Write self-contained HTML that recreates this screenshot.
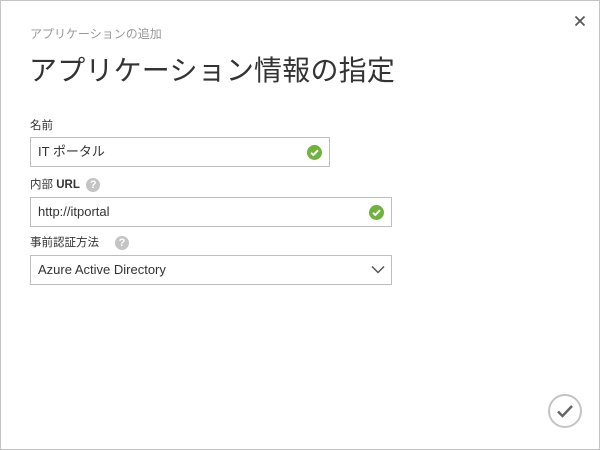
<!DOCTYPE html>
<html><head><meta charset="utf-8"><style>
*{margin:0;padding:0;box-sizing:border-box}
body{width:600px;height:450px;background:#fff;font-family:"Liberation Sans","Noto Sans CJK JP",sans-serif;color:#333;position:relative;overflow:hidden}
.frame{position:absolute;left:0;top:0;width:600px;height:450px;border:1px solid #c4c4c4}
.a{position:absolute}
.sub{left:30px;top:25px;font-size:12px;color:#999}
.title{left:29px;top:49px;font-size:28px;color:#333;letter-spacing:0.2px}
.lbl{font-size:11.5px;color:#333}
.box{border:1px solid #bdbdbd;height:30px;font-size:13px;padding-left:7px;line-height:28px;color:#333}
.chk{position:absolute;right:7px;top:7px;width:15px;height:15px;border-radius:50%;background:#6fb33d}
.chk svg{display:block}
.q{display:inline-block;width:14px;height:14px;border-radius:50%;background:#c4c4c4;color:#fff;font-size:11px;font-weight:bold;text-align:center;line-height:14px;vertical-align:middle}
</style></head><body>
<div class="frame"></div>
<div class="a sub">アプリケーションの追加</div>
<div class="a title">アプリケーション情報の指定</div>
<svg class="a" style="left:574px;top:15px" width="12" height="12"><path d="M1.5 1.5L10.5 10.5M10.5 1.5L1.5 10.5" stroke="#555" stroke-width="1.7"/></svg>

<div class="a lbl" style="left:30px;top:117px">名前</div>
<div class="a box" style="left:30px;top:137px;width:300px">IT ポータル<div class="chk"><svg width="15" height="15"><path d="M4 7.8L6.4 10L11 5.2" stroke="#fff" stroke-width="2" fill="none"/></svg></div></div>

<div class="a lbl" style="left:30px;top:176px">内部 <b>URL</b> &nbsp;<span class="q">?</span></div>
<div class="a box" style="left:30px;top:197px;width:362px">http://itportal<div class="chk"><svg width="15" height="15"><path d="M4 7.8L6.4 10L11 5.2" stroke="#fff" stroke-width="2" fill="none"/></svg></div></div>

<div class="a lbl" style="left:30px;top:234px">事前認証方法 &nbsp;&nbsp;&nbsp;&nbsp;<span class="q">?</span></div>
<div class="a box" style="left:30px;top:255px;width:362px">Azure Active Directory<svg style="position:absolute;right:6px;top:9px" width="14" height="9"><path d="M1 1.5L7 7.5L13 1.5" stroke="#555" stroke-width="1.5" fill="none"/></svg></div>

<svg class="a" style="left:547px;top:393px" width="36" height="36"><circle cx="18" cy="18" r="16" stroke="#c4c4c4" stroke-width="2" fill="none"/><path d="M11 18.5L15.5 23L25 13" stroke="#666" stroke-width="2.5" fill="none"/></svg>
</body></html>
